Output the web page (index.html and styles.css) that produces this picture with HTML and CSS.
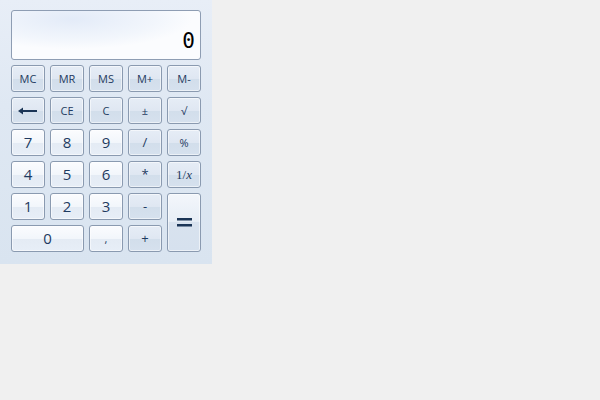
FILE: index.html
```html
<!DOCTYPE html>
<html>
<head>
<meta charset="utf-8">
<link rel="stylesheet" href="styles.css">
</head>
<body>
<div class="calc">
  <div class="display"><span class="value">0</span></div>
  <div class="keys">
    <button class="key op small">MC</button>
    <button class="key op small">MR</button>
    <button class="key op small">MS</button>
    <button class="key op small">M+</button>
    <button class="key op small">M-</button>

    <button class="key op"><svg width="20" height="8" viewBox="0 0 20 8"><path d="M3 4H19" stroke="#1b3556" stroke-width="2"/><path d="M0 4L5 0.5V7.5Z" fill="#1b3556"/></svg></button>
    <button class="key op small">CE</button>
    <button class="key op small">C</button>
    <button class="key op small">±</button>
    <button class="key op small">√</button>

    <button class="key num">7</button>
    <button class="key num">8</button>
    <button class="key num">9</button>
    <button class="key op sym">/</button>
    <button class="key op small">%</button>

    <button class="key num">4</button>
    <button class="key num">5</button>
    <button class="key num">6</button>
    <button class="key op sym">*</button>
    <button class="key op small inv">1/<i>x</i></button>

    <button class="key num">1</button>
    <button class="key num">2</button>
    <button class="key num">3</button>
    <button class="key op sym">-</button>
    <button class="key op eq"><svg width="15" height="9" viewBox="0 0 15 9"><rect x="0" y="0" width="15" height="2.5" fill="#1b3556"/><rect x="0" y="6" width="15" height="2.5" fill="#1b3556"/></svg></button>

    <button class="key num zero">0</button>
    <button class="key num small">,</button>
    <button class="key op sym">+</button>
  </div>
</div>
</body>
</html>
```
FILE: styles.css
```css
html, body {
  margin: 0;
  padding: 0;
}
body {
  background: #f0f0f0;
  width: 600px;
  height: 400px;
  font-family: "Open Sans", "Noto Sans", sans-serif;
}
.calc {
  width: 190px;
  padding: 10px 11px 12px 11px;
  background: linear-gradient(180deg, #e8eef7 0%, #dfe8f3 40%, #d9e4f0 100%);
  display: flex;
  flex-direction: column;
  gap: 5px;
}
.display {
  box-sizing: border-box;
  height: 50px;
  border: 1px solid #8e9db3;
  border-radius: 3px;
  background: radial-gradient(ellipse 120px 30px at 60px 8px, #e3ebf8 0%, #f2f6fc 70%, #fbfcfe 100%);
  display: flex;
  align-items: flex-end;
  justify-content: flex-end;
  padding: 0 5px 6px 0;
}
.value {
  font-family: "DejaVu Sans Mono", monospace;
  font-size: 21px;
  line-height: 24px;
  color: #000;
}
.keys {
  display: grid;
  grid-template-columns: repeat(5, 34px);
  grid-auto-rows: 27px;
  gap: 5px;
}
.key {
  box-sizing: border-box;
  margin: 0;
  padding: 0;
  border: 1px solid #8a9ab0;
  border-radius: 3px;
  color: #1e3a60;
  font-family: "Open Sans", "Noto Sans", sans-serif;
  font-size: 15px;
  display: flex;
  align-items: center;
  justify-content: center;
  line-height: 1;
  box-shadow: inset 0 0 0 1px rgba(255,255,255,0.55);
}
.num {
  background: linear-gradient(180deg, #fbfcfe 0%, #f2f6fb 50%, #e4ebf4 52%, #e7eef7 100%);
}
.op {
  background: linear-gradient(180deg, #e6edf6 0%, #dfe7f2 50%, #d2deeb 52%, #d6e1ee 100%);
}
.small {
  font-size: 11px;
}
.sym {
  font-size: 13px;
}
.inv {
  font-family: "Liberation Serif", serif;
  font-size: 13px;
}
.inv i {
  font-style: italic;
}
.zero {
  grid-column: span 2;
  font-size: 15px;
}
.eq {
  grid-row: span 2;
  background: linear-gradient(180deg, #f3f6fb 0%, #e7eef6 48%, #d8e2ee 50%, #d6e1ee 100%);
}
```
